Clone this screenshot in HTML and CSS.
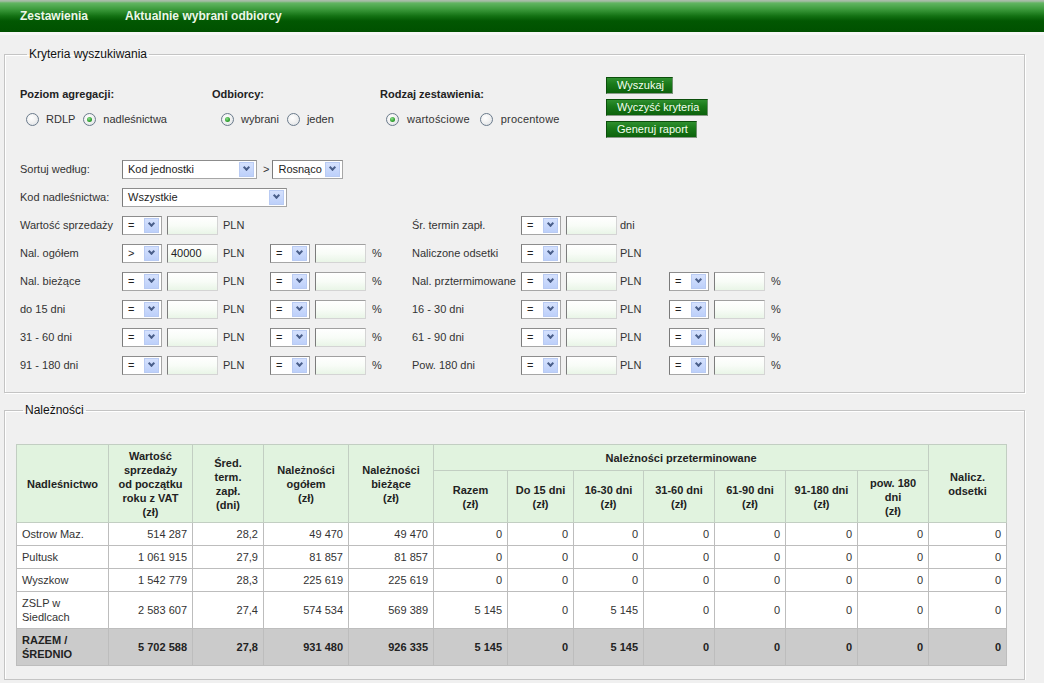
FILE: index.html
```html
<!DOCTYPE html>
<html lang="pl">
<head>
<meta charset="utf-8">
<title>Zestawienia</title>
<link rel="stylesheet" href="styles.css">
</head>
<body>
<div class="topbar">
  <span class="tab">Zestawienia</span>
  <span class="tab">Aktualnie wybrani odbiorcy</span>
</div>

<fieldset class="box criteria">
  <legend>Kryteria wyszukiwania</legend>
  <div class="top-row">
    <div class="group g1">
      <div class="gh">Poziom agregacji:</div>
      <div class="radios"><span class="radio"></span><span class="rl">RDLP</span><span class="radio on"></span><span class="rl">nadleśnictwa</span></div>
    </div>
    <div class="group g2">
      <div class="gh">Odbiorcy:</div>
      <div class="radios"><span class="radio on"></span><span class="rl">wybrani</span><span class="radio"></span><span class="rl">jeden</span></div>
    </div>
    <div class="group g3">
      <div class="gh">Rodzaj zestawienia:</div>
      <div class="radios"><span class="radio on"></span><span class="rl">wartościowe</span><span class="radio"></span><span class="rl">procentowe</span></div>
    </div>
    <div class="buttons">
      <span class="btn">Wyszukaj</span>
      <span class="btn">Wyczyść kryteria</span>
      <span class="btn">Generuj raport</span>
    </div>
  </div>

  <div class="crit">
    <span class="lbl c1">Sortuj według:</span>
    <div class="span-rest">
      <span class="sel w135"><span class="sv">Kod jednostki</span><span class="dd"></span></span>
      <span class="gt">&gt;</span>
      <span class="sel w71"><span class="sv">Rosnąco</span><span class="dd"></span></span>
    </div>

    <span class="lbl c1">Kod nadleśnictwa:</span>
    <div class="span-rest">
      <span class="sel w165"><span class="sv">Wszystkie</span><span class="dd"></span></span>
    </div>

    <span class="lbl c1">Wartość sprzedaży</span>
    <span class="sel"><span class="sv">=</span><span class="dd"></span></span>
    <span class="inp"></span>
    <span class="unit">PLN</span>
    <span class="lbl at8">Śr. termin zapł.</span>
    <span class="sel"><span class="sv">=</span><span class="dd"></span></span>
    <span class="inp"></span>
    <span class="unit">dni</span>

    <span class="lbl c1">Nal. ogółem</span>
    <span class="sel"><span class="sv">&gt;</span><span class="dd"></span></span>
    <span class="inp">40000</span>
    <span class="unit">PLN</span>
    <span class="sel"><span class="sv">=</span><span class="dd"></span></span>
    <span class="inp"></span>
    <span class="unit">%</span>
    <span class="lbl">Naliczone odsetki</span>
    <span class="sel"><span class="sv">=</span><span class="dd"></span></span>
    <span class="inp"></span>
    <span class="unit">PLN</span>

    <span class="lbl c1">Nal. bieżące</span>
    <span class="sel"><span class="sv">=</span><span class="dd"></span></span>
    <span class="inp"></span>
    <span class="unit">PLN</span>
    <span class="sel"><span class="sv">=</span><span class="dd"></span></span>
    <span class="inp"></span>
    <span class="unit">%</span>
    <span class="lbl">Nal. prztermimowane</span>
    <span class="sel"><span class="sv">=</span><span class="dd"></span></span>
    <span class="inp"></span>
    <span class="unit">PLN</span>
    <span class="sel"><span class="sv">=</span><span class="dd"></span></span>
    <span class="inp"></span>
    <span class="unit">%</span>

    <span class="lbl c1">do 15 dni</span>
    <span class="sel"><span class="sv">=</span><span class="dd"></span></span>
    <span class="inp"></span>
    <span class="unit">PLN</span>
    <span class="sel"><span class="sv">=</span><span class="dd"></span></span>
    <span class="inp"></span>
    <span class="unit">%</span>
    <span class="lbl">16 - 30 dni</span>
    <span class="sel"><span class="sv">=</span><span class="dd"></span></span>
    <span class="inp"></span>
    <span class="unit">PLN</span>
    <span class="sel"><span class="sv">=</span><span class="dd"></span></span>
    <span class="inp"></span>
    <span class="unit">%</span>

    <span class="lbl c1">31 - 60 dni</span>
    <span class="sel"><span class="sv">=</span><span class="dd"></span></span>
    <span class="inp"></span>
    <span class="unit">PLN</span>
    <span class="sel"><span class="sv">=</span><span class="dd"></span></span>
    <span class="inp"></span>
    <span class="unit">%</span>
    <span class="lbl">61 - 90 dni</span>
    <span class="sel"><span class="sv">=</span><span class="dd"></span></span>
    <span class="inp"></span>
    <span class="unit">PLN</span>
    <span class="sel"><span class="sv">=</span><span class="dd"></span></span>
    <span class="inp"></span>
    <span class="unit">%</span>

    <span class="lbl c1">91 - 180 dni</span>
    <span class="sel"><span class="sv">=</span><span class="dd"></span></span>
    <span class="inp"></span>
    <span class="unit">PLN</span>
    <span class="sel"><span class="sv">=</span><span class="dd"></span></span>
    <span class="inp"></span>
    <span class="unit">%</span>
    <span class="lbl">Pow. 180 dni</span>
    <span class="sel"><span class="sv">=</span><span class="dd"></span></span>
    <span class="inp"></span>
    <span class="unit">PLN</span>
    <span class="sel"><span class="sv">=</span><span class="dd"></span></span>
    <span class="inp"></span>
    <span class="unit">%</span>
  </div>
</fieldset>

<fieldset class="box results">
  <legend>Należności</legend>
  <table class="grid">
    <colgroup>
      <col class="k92"><col class="k84"><col class="k71"><col class="k85"><col class="k85">
      <col class="k74"><col class="k66"><col class="k70"><col class="k71"><col class="k71"><col class="k72"><col class="k71">
      <col class="k78">
    </colgroup>
    <thead>
      <tr class="h1">
        <th rowspan="2">Nadleśnictwo</th>
        <th rowspan="2">Wartość<br>sprzedaży<br>od początku<br>roku z VAT<br>(zł)</th>
        <th rowspan="2">Śred.<br>term.<br>zapł.<br>(dni)</th>
        <th rowspan="2">Należności<br>ogółem<br>(zł)</th>
        <th rowspan="2">Należności<br>bieżące<br>(zł)</th>
        <th colspan="7">Należności przeterminowane</th>
        <th rowspan="2">Nalicz.<br>odsetki</th>
      </tr>
      <tr class="h2">
        <th>Razem<br>(zł)</th>
        <th>Do 15 dni<br>(zł)</th>
        <th>16-30 dni<br>(zł)</th>
        <th>31-60 dni<br>(zł)</th>
        <th>61-90 dni<br>(zł)</th>
        <th>91-180 dni<br>(zł)</th>
        <th>pow. 180<br>dni<br>(zł)</th>
      </tr>
    </thead>
    <tbody>
      <tr><td class="name">Ostrow Maz.</td><td>514 287</td><td>28,2</td><td>49 470</td><td>49 470</td><td>0</td><td>0</td><td>0</td><td>0</td><td>0</td><td>0</td><td>0</td><td>0</td></tr>
      <tr><td class="name">Pultusk</td><td>1 061 915</td><td>27,9</td><td>81 857</td><td>81 857</td><td>0</td><td>0</td><td>0</td><td>0</td><td>0</td><td>0</td><td>0</td><td>0</td></tr>
      <tr><td class="name">Wyszkow</td><td>1 542 779</td><td>28,3</td><td>225 619</td><td>225 619</td><td>0</td><td>0</td><td>0</td><td>0</td><td>0</td><td>0</td><td>0</td><td>0</td></tr>
      <tr><td class="name">ZSLP w<br>Siedlcach</td><td>2 583 607</td><td>27,4</td><td>574 534</td><td>569 389</td><td>5 145</td><td>0</td><td>5 145</td><td>0</td><td>0</td><td>0</td><td>0</td><td>0</td></tr>
      <tr class="total"><td class="name">RAZEM /<br>ŚREDNIO</td><td>5 702 588</td><td>27,8</td><td>931 480</td><td>926 335</td><td>5 145</td><td>0</td><td>5 145</td><td>0</td><td>0</td><td>0</td><td>0</td><td>0</td></tr>
    </tbody>
  </table>
</fieldset>
</body>
</html>
```

FILE: styles.css
```css
html, body {
  margin: 0;
  padding: 0;
}
body {
  background: #f0f0f0;
  font-family: "Liberation Sans", Arial, sans-serif;
  font-size: 11px;
  color: #222;
}

/* top navigation */
.topbar {
  height: 32px;
  display: flex;
  align-items: center;
  gap: 37px;
  padding-left: 20px;
  background: linear-gradient(to bottom, #a9bca9 0, #a9bca9 1px, #62b562 3px, #3e9c3e 9px, #137113 16px, #025702 21px, #005100 100%);
  box-shadow: 0 3px 0 #f7f7f7;
  font-size: 12px;
  font-weight: bold;
  color: #ecf7e8;
}

/* fieldsets */
.box {
  margin: 0 19px 0 4px;
  padding: 0;
  border: 1px solid #c4c4c4;
  box-shadow: inset 1px 1px 0 #fff, 1px 1px 0 #fff;
  min-width: 0;
}
.box legend {
  margin-left: 7px;
  padding: 0 2px;
  font-size: 12px;
  line-height: 14px;
  color: #111;
}
.criteria {
  margin-top: 15px;
  padding: 16px 0 13px 15px;
}
.results {
  margin-top: 10px;
  padding: 27px 0 13px 11px;
}

/* top row: radios + buttons */
.top-row {
  display: flex;
  align-items: flex-start;
}
.group {
  margin-top: 10px;
}
.g1 { width: 192px; }
.g2 { width: 168px; }
.g3 { width: 226px; }
.gh {
  font-weight: bold;
  line-height: 14px;
  color: #222;
}
.radios {
  display: flex;
  align-items: center;
  margin-top: 11px;
  height: 14px;
}
.g1 .radios { padding-left: 6px; }
.g2 .radios { padding-left: 9px; }
.g3 .radios { padding-left: 6px; }
.radio {
  width: 11px;
  height: 11px;
  border: 1px solid #6b7b8c;
  border-radius: 50%;
  background: radial-gradient(circle at 40% 35%, #ffffff 0, #f2f2f2 45%, #d8dde2 100%);
  display: flex;
  align-items: center;
  justify-content: center;
  margin-right: 7px;
  flex: none;
}
.radio.on::after {
  content: "";
  width: 5px;
  height: 5px;
  border-radius: 50%;
  background: radial-gradient(circle at 40% 35%, #8fe08f 0, #2f9f2f 60%, #1f7f1f 100%);
}
.rl {
  margin-right: 8px;
  color: #333;
}
.g3 .rl { letter-spacing: 0.2px; margin-right: 10px; }
.g3 .radio { margin-right: 8px; }

.buttons {
  display: flex;
  flex-direction: column;
  align-items: flex-start;
  gap: 5px;
}
.btn {
  display: block;
  height: 15px;
  line-height: 15px;
  padding: 0 8px 0 10px;
  border: 1px solid #0b4f0b;
  border-right-color: #6f8f6f;
  border-bottom-color: #8a9a8a;
  background: linear-gradient(to bottom, #2f8f2f 0, #1a7a1a 40%, #0c620c 100%);
  color: #f4fff0;
  font-size: 11px;
  white-space: nowrap;
}

/* criteria grid */
.crit {
  margin-top: 17px;
  display: grid;
  grid-template-columns: 102px 45px 56px 47px 45px 57px 40px 109px 45px 54px 49px 45px 57px auto;
  grid-auto-rows: 28px;
  align-items: center;
}
.c1 { grid-column-start: 1; }
.at8 { grid-column-start: 8; }
.span-rest {
  grid-column: 2 / -1;
  display: flex;
  align-items: center;
}
.lbl {
  color: #333;
  white-space: nowrap;
}
.unit { color: #333; }
.gt {
  margin: 0 3px 0 6px;
  color: #333;
}

.sel {
  box-sizing: border-box;
  width: 40px;
  height: 19px;
  display: flex;
  align-items: center;
  background: #fff;
  border: 1px solid #a6a6a6;
  border-left-color: #7a7a7a;
  border-top-color: #8c8c8c;
}
.w135 { width: 135px; }
.w71 { width: 71px; }
.w165 { width: 165px; }
.sv {
  flex: 1;
  padding-left: 5px;
  white-space: nowrap;
  overflow: hidden;
  color: #222;
}
.dd {
  flex: none;
  box-sizing: border-box;
  width: 15px;
  height: 15px;
  margin-right: 2px;
  border: 1px solid #b9cbf3;
  background: linear-gradient(to bottom, #d5e1fd 0, #bdd0fa 100%);
  display: flex;
  align-items: center;
  justify-content: center;
}
.dd::after {
  content: "";
  width: 3px;
  height: 3px;
  border-right: 2px solid #4a5f8a;
  border-bottom: 2px solid #4a5f8a;
  transform: rotate(45deg);
  margin-top: -3px;
}

.inp {
  box-sizing: border-box;
  width: 51px;
  height: 19px;
  line-height: 17px;
  padding-left: 3px;
  border: 1px solid #d4d4d4;
  border-left-color: #7c7c7c;
  border-top-color: #a0a0a0;
  background: linear-gradient(to bottom, #ffffff 0, #f8fcf7 50%, #e9f5e7 100%);
  color: #222;
}

/* results table */
.grid {
  border-collapse: collapse;
  table-layout: fixed;
  width: 990px;
  background: #fff;
  font-size: 11px;
}
.k92 { width: 92px; }
.k84 { width: 84px; }
.k71 { width: 71px; }
.k85 { width: 85px; }
.k74 { width: 74px; }
.k66 { width: 66px; }
.k70 { width: 70px; }
.k72 { width: 72px; }
.k78 { width: 78px; }
.grid th {
  background: #e1f3df;
  border: 1px solid #c2cec2;
  font-weight: bold;
  color: #222;
  line-height: 14px;
  padding: 4px 2px;
  text-align: center;
  vertical-align: middle;
}
.grid .h1 { height: 26px; }
.grid .h2 { height: 52px; }
.grid .h1 th { padding: 0 2px; }
.grid td {
  border: 1px solid #bdbdbd;
  line-height: 14px;
  padding: 4px 5px 4px 4px;
  text-align: right;
  color: #333;
  vertical-align: middle;
}
.grid td.name {
  text-align: left;
  padding-left: 5px;
}
.grid .total td {
  background: #cbcbcb;
  font-weight: bold;
  color: #222;
}
```
